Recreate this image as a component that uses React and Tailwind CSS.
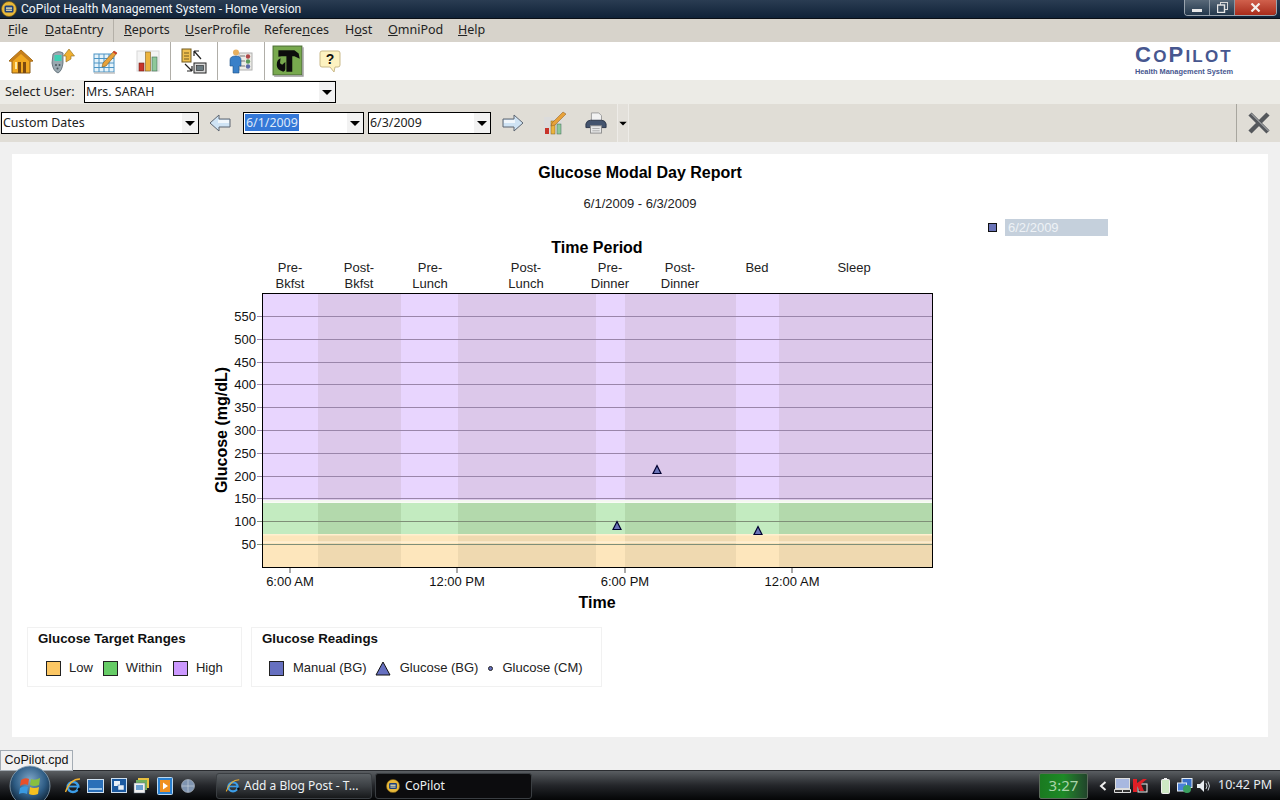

import React from "react";

const ui = "font-['Noto_Sans',sans-serif]";
const lib = "font-['Liberation_Sans',Arial,sans-serif]";

function Mn({ children, u }) {
  const i = children.indexOf(u);
  return <span>{children.slice(0, i)}<u>{u}</u>{children.slice(i + 1)}</span>;
}

function AppGlyph({ size = 16 }) {
  return (
    <svg width={size} height={size} viewBox="0 0 16 16">
      <circle cx="8" cy="8" r="7.5" fill="#e8b93a" stroke="#7a5a10" strokeWidth="0.7" />
      <rect x="3.5" y="4.5" width="9" height="7" rx="1.5" fill="#1c3f7c" />
      <rect x="5" y="6.4" width="6" height="1.4" fill="#f1e6b0" />
      <rect x="5" y="8.6" width="6" height="1.2" fill="#f1e6b0" />
    </svg>
  );
}

function Home() {
  return (
    <svg width="26" height="26" viewBox="0 0 26 26">
      <path d="M1 13 L13 2 L25 13 L22 13 L22 25 L4 25 L4 13 Z" fill="#f0a820" stroke="#8a5a14" strokeWidth="1" />
      <path d="M1 13 L13 2 L25 13 L22 14 L13 6 L4 14 Z" fill="#c57f1c" />
      <rect x="10" y="14" width="3" height="11" fill="#7b4a10" />
      <rect x="15" y="14" width="3" height="11" fill="#7b4a10" />
      <rect x="7" y="14" width="2" height="7" fill="#ffe9a0" />
    </svg>
  );
}
function Phone() {
  return (
    <svg width="26" height="28" viewBox="0 0 26 28">
      <path d="M3 7 Q8 3 13 6 L13 16 Q12 24 8 26 Q3 24 2 16 Z" fill="#9aa8b0" stroke="#56656d" strokeWidth="0.8" />
      <rect x="4.5" y="8" width="7" height="6" fill="#3fd0b4" />
      <circle cx="6" cy="18" r="1" fill="#46555c" /><circle cx="9.5" cy="18" r="1" fill="#46555c" />
      <circle cx="7.5" cy="21.5" r="1" fill="#46555c" />
      <path d="M16 15 L16 9 L13.5 9 L19 2 L24.5 9 L21 9 L21 12 Z" fill="#f0b030" stroke="#8a6a20" strokeWidth="0.6" />
    </svg>
  );
}
function GridPencil() {
  const lines = [];
  for (let i = 1; i < 4; i++) lines.push(<path key={i} d={`M${2 + i * 5} 6V24M2 ${6 + i * 4.5}H22`} stroke="#4c94c4" strokeWidth="1" />);
  return (
    <svg width="26" height="26" viewBox="0 0 26 26">
      <rect x="2" y="6" width="20" height="18" fill="#e6f3fa" stroke="#4c94c4" />
      {lines}
      <path d="M2 25 H23" stroke="#c0c0c0" strokeWidth="1.5" />
      <path d="M11 15 L22 3 L25 5 L14 18 L10 19 Z" fill="#e8a23a" stroke="#7a5a20" strokeWidth="0.6" />
      <path d="M22 3 L25 5 L24 6.5 L20.8 4.3 Z" fill="#d03a2a" />
    </svg>
  );
}
function Bars() {
  return (
    <svg width="24" height="24" viewBox="0 0 24 24">
      <rect x="1" y="2" width="22" height="20" fill="#f4f4f4" stroke="#d8d8d8" />
      <rect x="3" y="14" width="5" height="8" fill="#c8342a" stroke="#702018" strokeWidth="0.6" />
      <rect x="9.5" y="3" width="5" height="19" fill="#ecb43e" stroke="#806020" strokeWidth="0.6" />
      <rect x="16" y="8" width="5" height="14" fill="#8ec89a" stroke="#406a50" strokeWidth="0.6" />
    </svg>
  );
}
function Transfer() {
  return (
    <svg width="26" height="26" viewBox="0 0 26 26">
      <rect x="1" y="1" width="9" height="13" fill="#f0c050" stroke="#705a20" />
      <path d="M3 5H8M3 8H8M3 11H8" stroke="#705a20" />
      <rect x="13" y="15" width="12" height="10" fill="#d8d8d8" stroke="#222" />
      <rect x="15.5" y="17.5" width="7" height="5" fill="#6a7a80" stroke="#222" strokeWidth="0.6" />
      <path d="M13 3 L20 11 M13 3 H18 M13 3 V8" stroke="#222" strokeWidth="1.2" fill="none" />
      <path d="M11 23 L4 16 M11 23 H6 M11 23 V18" stroke="#222" strokeWidth="1.2" fill="none" />
    </svg>
  );
}
function PersonList() {
  return (
    <svg width="26" height="26" viewBox="0 0 26 26">
      <rect x="11" y="5" width="13" height="17" fill="#ecebe6" stroke="#b0b0b0" />
      <circle cx="20" cy="8.5" r="2.2" fill="#b04848" /><circle cx="20" cy="13.5" r="2.2" fill="#5a9a5a" /><circle cx="20" cy="18.5" r="2.2" fill="#5a6aa8" />
      <path d="M12 8H17M12 13H17M12 18H17" stroke="#777" />
      <circle cx="8" cy="4.5" r="3" fill="#e8b060" />
      <path d="M2 12 Q2 8 8 8 Q13 8 13 12 L13 18 L11 18 L11 25 L5 25 L5 18 L2 18 Z" fill="#3a80c8" stroke="#1f5088" strokeWidth="0.6" />
    </svg>
  );
}
function Tools() {
  return (
    <svg width="32" height="32" viewBox="0 0 30 30">
      <rect x="1" y="1" width="27" height="27" fill="#78a94e" stroke="#4c6f34" />
      <path d="M29 2V29H2" stroke="#9a9a9a" strokeWidth="1.4" fill="none" />
      <path d="M6 5 H21 L25 8 L26 13 L21 10.5 H19 V25 H13.5 V10.5 H9 L6 11 Z" fill="#0c0c0c" />
      <path d="M8 12.5 A6 6 0 0 0 4.5 18 A6 6 0 0 0 8 24 L10.5 25 A2.5 2.5 0 0 0 12.5 22.5 V16 L9.5 18.5 L7.5 17 Z" fill="#0c0c0c" />
    </svg>
  );
}
function Help() {
  return (
    <svg width="22" height="24" viewBox="0 0 22 24">
      <path d="M3 2 H19 Q21 2 21 4 V16 Q21 18 19 18 H16 L15 23 L11 18 H3 Q1 18 1 16 V4 Q1 2 3 2 Z" fill="#fdf2c0" stroke="#c9b98a" />
      <text x="11" y="15" textAnchor="middle" fontFamily="Liberation Sans" fontWeight="700" fontSize="14" fill="#111">?</text>
    </svg>
  );
}
function ArrowIcon({ right, w = 24 }) {
  return (
    <svg width={w} height="18" viewBox="0 0 24 18">
      <g transform={right ? "" : "translate(24,0) scale(-1,1)"}>
        <path d="M2 5 H13 V1 L22 9 L13 17 V13 H2 Z" fill="#cfe3f4" stroke="#5d6570" strokeWidth="1" />
        <path d="M3 6 H14 V9 H3 Z" fill="#f1f7fc" />
      </g>
    </svg>
  );
}
function ChartPencil() {
  return (
    <svg width="24" height="26" viewBox="0 0 24 26">
      <rect x="1" y="7" width="18" height="17" fill="#dcdcdc" />
      <rect x="2" y="18" width="4" height="6" fill="#c8342a" />
      <rect x="8" y="11" width="4" height="13" fill="#ecb43e" stroke="#806020" strokeWidth="0.5" />
      <rect x="14" y="14" width="4" height="10" fill="#8ec89a" stroke="#406a50" strokeWidth="0.5" />
      <path d="M9 13 L20 2 L23 4 L12 15 L8 16 Z" fill="#e8a23a" stroke="#8a5a20" strokeWidth="0.5" />
    </svg>
  );
}
function Printer() {
  return (
    <svg width="22" height="22" viewBox="0 0 24 24">
      <path d="M7 1 H15 L18 4 V10 H7 Z" fill="#f2f2f2" stroke="#9a9a9a" />
      <path d="M1 13 Q2 9 6 9 H18 Q22 9 23 13 V17 H1 Z" fill="#44546e" stroke="#2a3346" />
      <rect x="6" y="15" width="12" height="8" fill="#e8e8e8" stroke="#8a8a8a" />
      <path d="M8 18H16M8 20.5H16" stroke="#aaa" />
    </svg>
  );
}
function Caret({ cls = "" }) {
  return <span className={`w-0 h-0 border-l-[5px] border-r-[5px] border-t-[5px] border-l-transparent border-r-transparent border-t-black ${cls}`} />;
}
function Select({ cls, children, sel }) {
  return (
    <div className={`flex items-center h-[22px] bg-white border border-black ${cls}`}>
      <div className={`flex-1 pl-[1px] pb-[1px] text-[12.4px] leading-4 text-[#222] ${ui}`}>
        {sel ? <span className="bg-[#3478d8] text-[#dfe9f8] px-[1px]">{children}</span> : children}
      </div>
      <div className="w-[16px] h-full flex items-center justify-center bg-[#f2f2f2]"><Caret /></div>
    </div>
  );
}

function Chart() {
  const X0 = 262, X1 = 933;
  const cuts = [262, 318, 401, 458, 596, 625, 736, 779, 933];
  const grid = [[550, 316], [500, 339], [450, 362], [400, 384], [350, 407], [300, 430], [250, 453], [200, 476], [150, 498], [100, 521], [50, 544]];
  const bands = [
    [293, 207, "#e8d5fe", "#dcc8ea"],
    [503, 31, "#c3ebc0", "#b3d9ac"],
    [534, 33, "#fde6bc", "#efd9b0"],
  ];
  const periods = [[290, "Pre-", "Bkfst"], [359, "Post-", "Bkfst"], [430, "Pre-", "Lunch"], [526, "Post-", "Lunch"], [610, "Pre-", "Dinner"], [680, "Post-", "Dinner"], [757, "Bed"], [854, "Sleep"]];
  const ticks = [[290, "6:00 AM"], [457, "12:00 PM"], [625, "6:00 PM"], [792, "12:00 AM"]];
  const marks = [[657, 470], [617, 526], [758, 531]];
  const tf = { fontFamily: "Liberation Sans, Arial, sans-serif" };
  return (
    <svg width="760" height="380" viewBox="200 236 760 380" className="block" style={tf}>
      <rect x={X0} y="293" width={X1 - X0} height="275" fill="#fff" />
      {bands.map((b, i) => cuts.slice(0, -1).map((c, j) => (
        <rect key={`${i}-${j}`} x={c} y={b[0]} width={cuts[j + 1] - c} height={b[1]} fill={j % 2 ? b[3] : b[2]} />
      )))}
      <rect x={X0} y="500" width={X1 - X0} height="2.5" fill="#f4f8f0" />
      <rect x={X0} y="534" width={X1 - X0} height="1.5" fill="#fff0d0" />
      <rect x={X0} y="541.5" width={X1 - X0} height="1.2" fill="#fff4dc" />
      {grid.map(([v, y]) => (
        <g key={v}>
          <line x1={X0 - 5} x2={X1} y1={y + 0.5} y2={y + 0.5} stroke={v <= 100 ? "#7f8f78" : "#9a86aa"} />
          <text x="256" y={y + 5} textAnchor="end" fontSize="13" fill="#111">{v}</text>
        </g>
      ))}
      <rect x={X0 + 0.5} y="293.5" width={X1 - X0 - 1} height="274" fill="none" stroke="#000" />
      {ticks.map(([x, t]) => (
        <g key={t}>
          <line x1={x} x2={x} y1="568" y2="573" stroke="#555" />
          <text x={x} y="586" textAnchor="middle" fontSize="13" fill="#111">{t}</text>
        </g>
      ))}
      {periods.map(([x, a, b]) => (
        <g key={x + a} fontSize="13" fill="#222" textAnchor="middle">
          <text x={x} y="272">{a}</text>
          {b && <text x={x} y="288">{b}</text>}
        </g>
      ))}
      {marks.map(([x, y]) => (
        <path key={x} d={`M${x} ${y - 4.5} L${x + 4} ${y + 3.5} H${x - 4} Z`} fill="#6a74b8" stroke="#000030" strokeWidth="1.2" />
      ))}
      <text x="597" y="253" textAnchor="middle" fontSize="16" fontWeight="700" fill="#000">Time Period</text>
      <text x="597" y="608" textAnchor="middle" fontSize="16" fontWeight="700" fill="#000">Time</text>
      <text transform="translate(227,430) rotate(-90)" textAnchor="middle" fontSize="16" fontWeight="700" fill="#000">Glucose (mg/dL)</text>
    </svg>
  );
}

function Swatch({ c }) {
  return <span className={`w-[15px] h-[15px] border border-[#222] ${c}`} />;
}
function LegendBox({ cls, title, children }) {
  return (
    <div className={`h-[60px] border border-[#f1f1f1] pl-[10px] pt-[2px] ${cls}`}>
      <div className="text-[13.3px] font-bold leading-[17px] text-[#111]">{title}</div>
      <div className="flex items-center mt-[13px] text-[13px] leading-4 text-[#222]">{children}</div>
    </div>
  );
}

function Tool({ children, sep, w = "w-[43px]" }) {
  return (
    <div className={`h-[38px] flex items-center justify-center ${w} ${sep ? "border-r border-[#b0aea8]" : ""}`}>{children}</div>
  );
}

function Taskbtn({ cls, icon, children, active }) {
  return (
    <div className={`h-[26px] flex items-center rounded-[3px] border border-[#3a3e42] text-[12px] text-[#eef2f4] ${ui} ${active ? "bg-[#0c0c0e]" : "bg-gradient-to-b from-[#5b6064] via-[#3c4044] to-[#17191b]"} ${cls}`}>
      {icon}{children}
    </div>
  );
}

function IE({ size = 18 }) {
  return (
    <svg width={size} height={size} viewBox="0 0 18 18">
      <ellipse cx="9" cy="10" rx="5.2" ry="5" fill="none" stroke="#3c9ee8" strokeWidth="2.6" />
      <path d="M4 9.5 H14" stroke="#3c9ee8" strokeWidth="1.8" />
      <path d="M14 11.5 L16 13" stroke="#05070a" strokeWidth="2.4" />
      <path d="M1.5 15 Q6 2 16 2" stroke="#f0b030" strokeWidth="1.3" fill="none" />
    </svg>
  );
}
function Orb() {
  return (
    <svg width="42" height="38" viewBox="0 0 42 38">
      <defs>
        <radialGradient id="o" cx="50%" cy="35%" r="65%">
          <stop offset="0%" stopColor="#7ea6c8" /><stop offset="60%" stopColor="#2e5c84" /><stop offset="100%" stopColor="#0d1f30" />
        </radialGradient>
      </defs>
      <circle cx="21" cy="21" r="20" fill="url(#o)" stroke="#8aa2b4" strokeWidth="0.8" />
      <path d="M12 15 Q16 12 20 14 L19 20 Q15 18 11 21 Z" fill="#e8502a" />
      <path d="M22 14 Q26 16 31 13 L30 20 Q25 22 21 20 Z" fill="#88c040" />
      <path d="M11 23 Q15 20 19 22 L18 29 Q14 27 10 29 Z" fill="#3a9ae0" />
      <path d="M21 22 Q25 24 30 22 L29 29 Q24 31 20 29 Z" fill="#f4c020" />
    </svg>
  );
}

function TinyTask({ children }) {
  return <div className="w-[23px] flex justify-center">{children}</div>;
}

export default function App() {
  return (
    <div className={`relative w-[1280px] h-[800px] overflow-hidden flex flex-col bg-[#f0f0f0] ${lib}`}>
      {/* title bar */}
      <div className="h-[19px] shrink-0 flex items-center bg-gradient-to-b from-[#2a3c52] to-[#0f2238] border-b border-[#0a0f16]">
        <div className="pl-[1px] pr-[4px]"><AppGlyph /></div>
        <div className="flex-1 font-['Roboto',sans-serif] text-[12.1px] leading-[18px] text-[#f0f4f8]">CoPilot Health Management System - Home Version</div>
        <div className="flex h-[16px] self-start mr-[3px] rounded-b-[4px] border border-t-0 border-[#9aa4ae] overflow-hidden">
          <div className="w-[25px] flex items-center justify-center bg-gradient-to-b from-[#586878] to-[#24384c] border-r border-[#8a96a2]"><span className="w-[10px] h-[3px] mt-[6px] bg-[#e8e8e8]" /></div>
          <div className="w-[25px] flex items-center justify-center bg-gradient-to-b from-[#586878] to-[#24384c] border-r border-[#8a96a2]">
            <svg width="11" height="11" viewBox="0 0 11 11"><rect x="3.5" y="0.5" width="7" height="7" fill="none" stroke="#d8d8d8" /><rect x="0.5" y="3" width="7" height="7.5" fill="#3c4e60" stroke="#e8e8e8" strokeWidth="1.4" /></svg>
          </div>
          <div className="w-[41px] flex items-center justify-center bg-gradient-to-b from-[#d0604c] to-[#a82a1a]">
            <svg width="11" height="9" viewBox="0 0 11 9"><path d="M1.5 0.5 L9.5 8.5 M9.5 0.5 L1.5 8.5" stroke="#f4f0ec" strokeWidth="2.2" /></svg>
          </div>
        </div>
      </div>

      {/* menu */}
      <div className={`h-[23px] shrink-0 flex items-center bg-[#d7d3cb] text-[#222] text-[12.5px] ${ui}`}>
        <div className="pl-[8px] w-[45px]"><Mn u="F">File</Mn></div>
        <div className="w-[68px]"><Mn u="D">DataEntry</Mn></div>
        <div className="w-[11px] h-full border-l border-[#b4b0a8]" />
        <div className="w-[61px]"><Mn u="R">Reports</Mn></div>
        <div className="w-[79px]"><Mn u="U">UserProfile</Mn></div>
        <div className="w-[81px]"><Mn u="n">References</Mn></div>
        <div className="w-[43px]"><Mn u="o">Host</Mn></div>
        <div className="w-[70px]"><Mn u="O">OmniPod</Mn></div>
        <div><Mn u="H">Help</Mn></div>
      </div>

      {/* toolbar */}
      <div className="h-[38px] shrink-0 flex items-center bg-white">
        <Tool w="w-[41px]"><Home /></Tool>
        <Tool w="w-[43px]"><Phone /></Tool>
        <Tool w="w-[42px]"><GridPencil /></Tool>
        <Tool sep w="w-[45px]"><Bars /></Tool>
        <Tool sep w="w-[47px]"><Transfer /></Tool>
        <Tool sep w="w-[47px]"><PersonList /></Tool>
        <Tool w="w-[45px]"><Tools /></Tool>
        <Tool w="w-[40px]"><Help /></Tool>
        <div className={`ml-auto mr-[45px] w-[102px] flex flex-col items-center text-[#47578f] ${lib}`}>
          <div className="text-[22px] leading-[20px] font-bold tracking-[2.2px] whitespace-nowrap">C<span className="text-[17px]">O</span>P<span className="text-[17px]">ILOT</span></div>
          <div className="text-[7.4px] leading-[10px] font-bold whitespace-nowrap">Health Management System</div>
        </div>
      </div>

      {/* select user */}
      <div className="h-[24px] shrink-0 flex items-start pt-[1px] bg-[#ecebe6]">
        <div className={`pl-[5px] w-[84px] text-[12.7px] leading-[20px] text-[#222] ${ui}`}>Select User:</div>
        <Select cls="w-[252px]">Mrs. SARAH</Select>
      </div>

      {/* date bar */}
      <div className="h-[38px] shrink-0 flex items-center bg-[#e0ddd6] pl-[1px]">
        <Select cls="w-[198px]">Custom Dates</Select>
        <div className="w-[44px] flex justify-center pr-[3px]"><ArrowIcon /></div>
        <Select cls="w-[121px]" sel>6/1/2009</Select>
        <div className="w-[4px]" />
        <Select cls="w-[123px]">6/3/2009</Select>
        <div className="w-[44px] flex justify-center"><ArrowIcon right /></div>
        <div className="w-[40px] flex justify-center"><ChartPencil /></div>
        <div className="w-[42px] flex justify-center"><Printer /></div>
        <div className="w-[12px] h-full flex items-center justify-center bg-[#e3e0da] border-x border-[#eeece8]"><Caret cls="scale-75" /></div>
        <div className="ml-auto w-[44px] h-full border-l border-[#a8a69f] flex items-center justify-center">
          <svg width="24" height="24" viewBox="0 0 24 24"><path d="M3 3 L21 21 M21 3 L3 21" stroke="#55585c" strokeWidth="4.5" /><path d="M4 2.5 L21.5 20" stroke="#c0c2c4" strokeWidth="1" /></svg>
        </div>
      </div>

      {/* content */}
      <div className="flex-1 min-h-0 pl-[12px] pr-[12px] pt-[12px]">
        <div className="w-[1256px] h-[583px] bg-white flex flex-col">
          <div className="pt-[9px] text-center text-[16px] leading-[20px] font-bold text-black">Glucose Modal Day Report</div>
          <div className="mt-[11px] text-center text-[13px] leading-[20px] text-[#222]">6/1/2009 - 6/3/2009</div>
          <div className="mt-[4px] h-[18px] flex items-center pl-[976px]">
            <span className="w-[9px] h-[9px] bg-[#6a74b8] border border-[#111]" />
            <div className="ml-[8px] w-[103px] h-[17px] pl-[3px] bg-[#c5d0dc] text-[13px] leading-[17px] text-[#eef2f6]">6/2/2009</div>
          </div>
          <div className="pl-[188px]"><Chart /></div>
          <div className="flex pl-[15px] gap-[9px] mt-[11px]">
            <LegendBox cls="w-[215px]" title="Glucose Target Ranges">
              <span className="ml-[8px]"><Swatch c="block bg-[#fcc764]" /></span>
              <span className="ml-[8px]">Low</span>
              <span className="ml-[10px]"><Swatch c="block bg-[#66cc66]" /></span>
              <span className="ml-[8px]">Within</span>
              <span className="ml-[11px]"><Swatch c="block bg-[#cc99ff]" /></span>
              <span className="ml-[8px]">High</span>
            </LegendBox>
            <LegendBox cls="w-[351px]" title="Glucose Readings">
              <span className="ml-[7px]"><Swatch c="block bg-[#6670c0]" /></span>
              <span className="ml-[9px]">Manual (BG)</span>
              <svg className="ml-[8px]" width="16" height="15" viewBox="0 0 16 15"><path d="M8 1 L15 14 H1 Z" fill="#6670c0" stroke="#111" /></svg>
              <span className="ml-[9px]">Glucose (BG)</span>
              <span className="ml-[10px] w-[5px] h-[5px] rounded-full bg-[#6670c0] border border-[#222]" />
              <span className="ml-[9px]">Glucose (CM)</span>
            </LegendBox>
          </div>
        </div>
      </div>

      {/* taskbar */}
      <div className="h-[30px] shrink-0 flex items-center bg-gradient-to-b from-[#5a5e62] via-[#24262a] to-[#050607] border-t border-[#2a2c30]">
        <div className="w-[61px]" />
        <TinyTask><IE /></TinyTask>
        <TinyTask><svg width="17" height="14" viewBox="0 0 17 14"><rect x="0.5" y="0.5" width="16" height="13" fill="#2a6fb8" stroke="#cfe0f0" /><rect x="2" y="9" width="13" height="2" fill="#9cc4e8" /></svg></TinyTask>
        <TinyTask><svg width="16" height="15" viewBox="0 0 16 15"><rect x="0.5" y="0.5" width="15" height="14" fill="#1c5aa0" stroke="#cfe0f0" /><rect x="3" y="3" width="6" height="5" fill="#e8f0f8" /><rect x="7" y="7" width="6" height="5" fill="#e8f0f8" stroke="#1c5aa0" strokeWidth="0.5" /></svg></TinyTask>
        <TinyTask><svg width="17" height="17" viewBox="0 0 17 17"><rect x="5" y="1" width="11" height="10" fill="#e8c040" /><rect x="3" y="3" width="11" height="10" fill="#70b060" /><rect x="1" y="6" width="11" height="10" fill="#f0f0f0" stroke="#607080" strokeWidth="0.5" /><rect x="3" y="8" width="7" height="5" fill="#6aa0d0" /></svg></TinyTask>
        <TinyTask><svg width="16" height="18" viewBox="0 0 16 18"><rect x="0.5" y="0.5" width="15" height="17" rx="1" fill="#2a80d0" stroke="#bcd8f0" /><rect x="3" y="3" width="10" height="12" fill="#f09020" /><path d="M6 5.5 L11 9 L6 12.5 Z" fill="#fff" /></svg></TinyTask>
        <TinyTask><svg width="14" height="14" viewBox="0 0 14 14"><circle cx="7" cy="7" r="6.5" fill="#7f94b0" stroke="#c0c8d0" strokeWidth="0.6" /><path d="M7 1V13M1 7H13" stroke="#d0d8e0" strokeWidth="0.6" /></svg></TinyTask>
        <div className="w-[17px]" />
        <Taskbtn cls="w-[156px] pl-[8px]" icon={<span className="mr-[3px]"><IE size={16} /></span>}>Add a Blog Post - T...</Taskbtn>
        <div className="w-[3px]" />
        <Taskbtn cls="w-[157px] pl-[10px]" active icon={<span className="mr-[5px]"><AppGlyph size={14} /></span>}>CoPilot</Taskbtn>
        <div className="ml-auto flex items-center h-full">
          <div className={`w-[49px] h-[26px] flex items-center justify-center rounded-[2px] border border-[#5a6a5a] bg-gradient-to-r from-[#1a7a20] via-[#1d8a26] to-[#20452a] text-[15px] text-[#a8d4a8] ${ui}`}>3:27</div>
          <svg className="ml-[11px]" width="8" height="10" viewBox="0 0 8 10"><path d="M6.5 1 L2 5 L6.5 9" stroke="#eee" strokeWidth="2" fill="none" /></svg>
          <svg className="ml-[7px]" width="17" height="15" viewBox="0 0 17 15"><rect x="1.5" y="0.5" width="14" height="10" fill="#a8b8e0" stroke="#ddd" /><path d="M0.5 11.5 H16.5 V14.5 H0.5 Z M8.5 11.5 V14.5" fill="#333" stroke="#ddd" /></svg>
          <svg className="ml-[1px]" width="16" height="15" viewBox="0 0 16 15"><rect x="6" y="6" width="9" height="8" fill="#222" stroke="#eee" /><path d="M1 1 H5 V5 L11 1 H15 L9 6 L12 13 H8 L5 8 V14 H1 Z" fill="#e01f26" /></svg>
          <svg className="ml-[13px]" width="9" height="16" viewBox="0 0 9 16"><rect x="3" y="0" width="3" height="2" fill="#eee" /><rect x="0.5" y="1.5" width="8" height="14" rx="1" fill="#cde8c4" stroke="#eee" /></svg>
          <svg className="ml-[7px]" width="16" height="16" viewBox="0 0 16 16"><rect x="5" y="0.5" width="10" height="9" fill="#3a70c8" stroke="#e4ecf4" /><rect x="0.5" y="5" width="9" height="8" fill="#4a80d8" stroke="#e4ecf4" /><circle cx="10" cy="11" r="4" fill="#3aa060" /></svg>
          <svg className="ml-[3px]" width="15" height="14" viewBox="0 0 15 14"><path d="M1 5 H4 L8 1 V13 L4 9 H1 Z" fill="#e8edf2" /><path d="M10 4 Q12 7 10 10 M12 2.5 Q15 7 12 11.5" stroke="#c8d0d8" fill="none" /></svg>
          <div className={`ml-[7px] w-[62px] text-[12.5px] text-[#e8ecf0] whitespace-nowrap ${ui}`}>10:42 PM</div>
        </div>
      </div>

      {/* overlays */}
      <div className="absolute left-0 top-[750px] w-[73px] h-[21px] bg-[#f1f1f1] border border-[#a4acb4] text-center text-[12.5px] leading-[19px] text-[#111]">CoPilot.cpd</div>
      <div className="absolute left-[9px] top-[765px]"><Orb /></div>
    </div>
  );
}
